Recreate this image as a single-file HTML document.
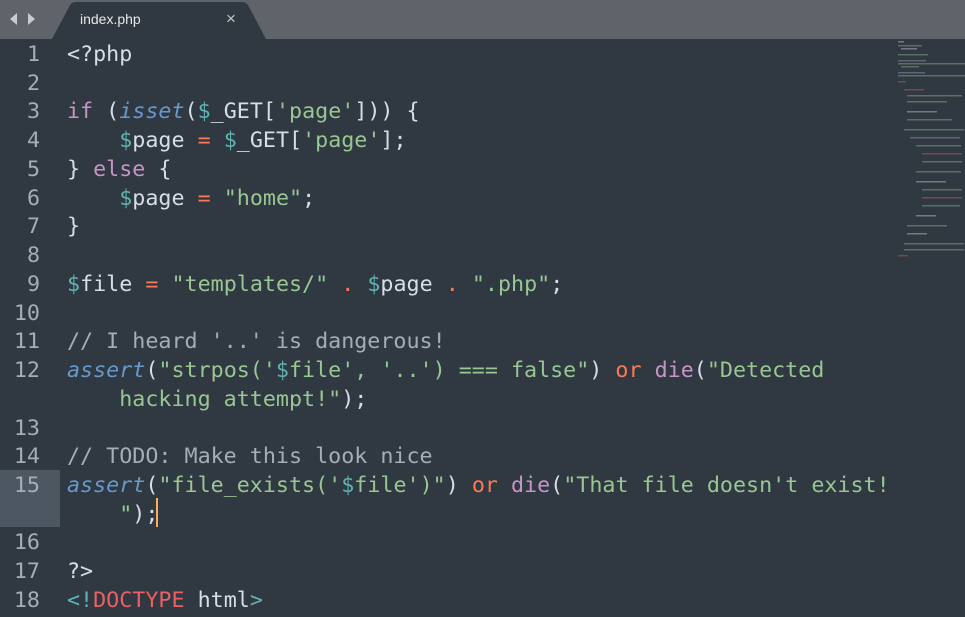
<!DOCTYPE html>
<html><head><style>
body{margin:0;width:965px;height:617px;overflow:hidden;background:#303841;position:relative;font-family:"Liberation Mono","DejaVu Sans Mono",monospace;}
#bar{position:absolute;left:0;top:0;width:965px;height:39px;background:#5f646b;}
#tab{position:absolute;left:52px;top:2px;width:214px;height:37px;}
#tabtxt{position:absolute;left:80px;top:11px;font:14px "Liberation Sans",sans-serif;color:#e8e8e8;}
#x{position:absolute;left:226px;top:9px;font:17px "Liberation Sans",sans-serif;color:#c8c8c8;}
#hl{position:absolute;left:0;top:470px;width:60px;height:57px;background:#4d5761;}
pre{margin:0;position:absolute;top:41px;font-size:21.7px;line-height:28.74px;}
#g{left:0;width:40px;text-align:right;color:#a6acb9;}
#c{left:67px;color:#d8dee9;}
.k{color:#c695c6}.f{color:#6699cc;font-style:italic}.v{color:#5fb4b4}.s{color:#99c794}.o{color:#f97b58}.cm{color:#a6acb9}.d{color:#c695c6}.r{color:#ec5f66}
#caret{position:absolute;left:156px;top:498px;width:2px;height:29px;background:#f9ae58;}
#mm{position:absolute;left:898px;top:39px;width:67px;height:220px;}
</style></head><body>
<div id="bar"></div>
<svg id="tab" viewBox="0 0 214 37"><path d="M0 37 L18 3 Q20 0 24 0 L190 0 Q194 0 196 3 L214 37 Z" fill="#303841"/></svg>
<svg style="position:absolute;left:8px;top:12px" width="30" height="14"><path d="M9 1 L2 7 L9 13Z" fill="#c8cbcf"/><path d="M20 1 L27 7 L20 13Z" fill="#c8cbcf"/></svg>
<div id="tabtxt">index.php</div><div id="x">×</div>
<div id="hl"></div>
<pre id="g">1
2
3
4
5
6
7
8
9
10
11
12

13
14
15

16
17
18</pre>
<pre id="c">&lt;?php

<span class="k">if</span> (<span class="f">isset</span>(<span class="v">$</span>_GET[<span class="s">'page'</span>])) {
    <span class="v">$</span>page <span class="o">=</span> <span class="v">$</span>_GET[<span class="s">'page'</span>];
} <span class="k">else</span> {
    <span class="v">$</span>page <span class="o">=</span> <span class="s">"home"</span>;
}

<span class="v">$</span>file <span class="o">=</span> <span class="s">"templates/"</span> <span class="o">.</span> <span class="v">$</span>page <span class="o">.</span> <span class="s">".php"</span>;

<span class="cm">// I heard '..' is dangerous!</span>
<span class="f">assert</span>(<span class="s">"strpos('<span class="v">$</span>file', '..') === false"</span>) <span class="o">or</span> <span class="d">die</span>(<span class="s">"Detected</span>
<span class="s">    hacking attempt!"</span>);

<span class="cm">// TODO: Make this look nice</span>
<span class="f">assert</span>(<span class="s">"file_exists('<span class="v">$</span>file')"</span>) <span class="o">or</span> <span class="d">die</span>(<span class="s">"That file doesn't exist!</span>
<span class="s">    "</span>);

?&gt;
<span class="v">&lt;!</span><span class="r">DOCTYPE</span> html<span class="v">&gt;</span></pre>
<div id="caret"></div>
<svg id="mm" viewBox="0 0 67 220">
<g opacity="0.4">
<rect x="0" y="2" width="6" height="1.5" fill="#d8dee9"/>
<rect x="0" y="6" width="24" height="1.5" fill="#99c794"/>
<rect x="3" y="9" width="16" height="1.5" fill="#d8dee9"/>
<rect x="0" y="15" width="30" height="1.5" fill="#99c794"/>
<rect x="0" y="21" width="28" height="1.5" fill="#a6acb9"/>
<rect x="0" y="24" width="67" height="1.5" fill="#99c794"/>
<rect x="3" y="27" width="18" height="1.5" fill="#99c794"/>
<rect x="0" y="33" width="27" height="1.5" fill="#a6acb9"/>
<rect x="0" y="36" width="67" height="1.5" fill="#99c794"/>
<rect x="0" y="42" width="8" height="1.5" fill="#ec5f66"/>
<rect x="6" y="50" width="20" height="1.5" fill="#ec5f66"/>
<rect x="9" y="56" width="55" height="1.5" fill="#99c794"/>
<rect x="9" y="62" width="40" height="1.5" fill="#99c794"/>
<rect x="9" y="72" width="30" height="1.5" fill="#d8dee9"/>
<rect x="9" y="80" width="45" height="1.5" fill="#99c794"/>
<rect x="6" y="90" width="60" height="1.5" fill="#99c794"/>
<rect x="12" y="98" width="50" height="1.5" fill="#c695c6"/>
<rect x="18" y="106" width="45" height="1.5" fill="#99c794"/>
<rect x="24" y="114" width="40" height="1.5" fill="#ec5f66"/>
<rect x="24" y="122" width="40" height="1.5" fill="#99c794"/>
<rect x="18" y="132" width="45" height="1.5" fill="#99c794"/>
<rect x="18" y="142" width="30" height="1.5" fill="#d8dee9"/>
<rect x="24" y="150" width="40" height="1.5" fill="#99c794"/>
<rect x="24" y="158" width="40" height="1.5" fill="#ec5f66"/>
<rect x="24" y="166" width="38" height="1.5" fill="#99c794"/>
<rect x="18" y="176" width="20" height="1.5" fill="#d8dee9"/>
<rect x="9" y="186" width="40" height="1.5" fill="#99c794"/>
<rect x="9" y="194" width="20" height="1.5" fill="#d8dee9"/>
<rect x="6" y="204" width="60" height="1.5" fill="#99c794"/>
<rect x="6" y="210" width="60" height="1.5" fill="#99c794"/>
<rect x="0" y="216" width="10" height="1.5" fill="#ec5f66"/>
</g>
</svg>
</body></html>
